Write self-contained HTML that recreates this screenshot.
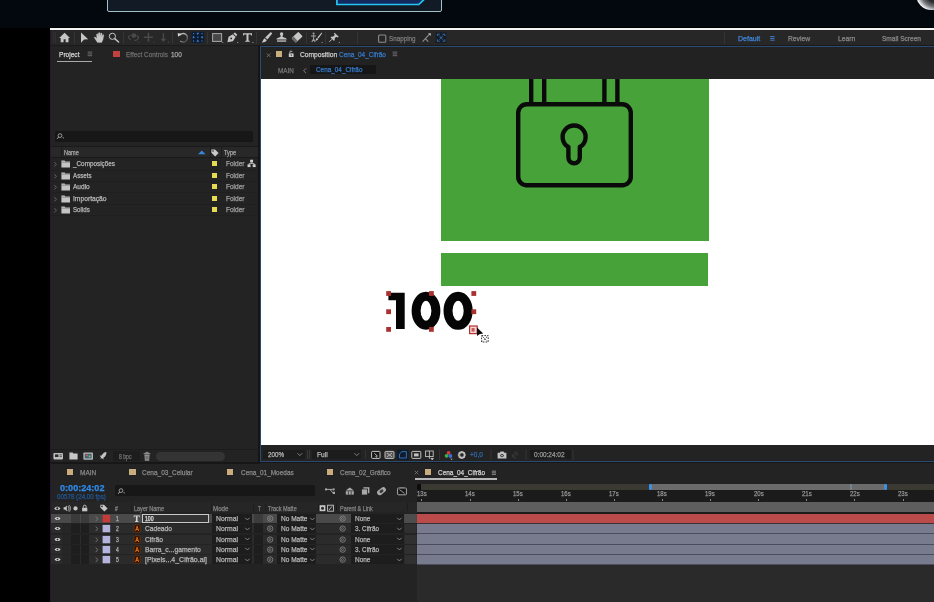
<!DOCTYPE html>
<html><head><meta charset="utf-8"><title>AE</title>
<style>
html,body{margin:0;padding:0;}
html{overflow:hidden;width:934px;height:602px;}
body{width:934px;height:602px;overflow:hidden;background:#232323;position:relative;font-family:"Liberation Sans",sans-serif;}
#r{position:absolute;left:0;top:0;width:934px;height:602px;filter:blur(0.6px);}
#r div,#r svg,#r span{position:absolute;display:block;}
.t{white-space:nowrap;transform-origin:0 50%;-webkit-text-stroke:0.25px currentColor;}
</style></head><body><div id="r">
<div style="left:-12px;top:-12px;width:958px;height:40px;background:#03070e;"></div>
<div style="left:107px;top:-5.7px;width:333.4px;height:15.2px;background:#111a25;border:1.1px solid #a3c1c8;border-radius:2px;"></div>
<svg style="left:330px;top:0px;" width="104" height="8" viewBox="0 0 104 8"><path d="M6.9,-2 V4.5 H88.8 L95.6,-2" fill="#132a5e" stroke="#24c6f4" stroke-width="1.7"/></svg>
<div style="left:915.6px;top:-21.4px;width:31px;height:31px;background:#1b1e22;border-radius:50%;background:radial-gradient(circle at 64% 40%,#202226 0,#2a2c30 40%,#77797c 58%,#f2f2f2 74%,#f6f6f6 100%);"></div>
<div style="left:-12px;top:27.6px;width:62px;height:587px;background:#000;"></div>
<div style="left:50px;top:30px;width:1.2px;height:584px;background:#2a1536;"></div>
<div style="left:50px;top:26.7px;width:896px;height:1.3px;background:#000;"></div>
<div style="left:50px;top:27.8px;width:896px;height:2.4px;background:#f4f4f4;"></div>
<div style="left:51px;top:30.2px;width:895px;height:1.1px;background:#1c1c1c;"></div>
<div style="left:51px;top:30.2px;width:895px;height:16px;background:#272727;"></div>
<div style="left:73.9px;top:31.5px;width:1px;height:12px;background:#343434;"></div>
<div style="left:122.8px;top:31.5px;width:1px;height:12px;background:#343434;"></div>
<div style="left:172.1px;top:31.5px;width:1px;height:12px;background:#343434;"></div>
<div style="left:206.9px;top:31.5px;width:1px;height:12px;background:#343434;"></div>
<div style="left:256.1px;top:31.5px;width:1px;height:12px;background:#343434;"></div>
<div style="left:305.7px;top:31.5px;width:1px;height:12px;background:#343434;"></div>
<div style="left:325.0px;top:31.5px;width:1px;height:12px;background:#343434;"></div>
<div style="left:356.5px;top:31.5px;width:1px;height:12px;background:#343434;"></div>
<div style="left:723.8px;top:31.5px;width:1px;height:12px;background:#343434;"></div>
<div style="left:51px;top:44.8px;width:895px;height:1.6px;background:#1a1a1a;"></div>
<div style="left:53px;top:32px;width:0.8px;height:11px;background:#313131;"></div>
<div style="left:54.6px;top:32px;width:0.8px;height:11px;background:#313131;"></div>
<svg style="left:50px;top:28px;" width="884" height="20" viewBox="50 28 884 20"><path d="M59.2,38 L64.6,32.8 L70,38 L68.5,38 L68.5,42.2 L65.6,42.2 L65.6,39.2 L63.6,39.2 L63.6,42.2 L60.7,42.2 L60.7,38 Z" fill="#c6c6c6"/><path d="M81,32.6 L88.2,39.2 L84.1,39.6 L81,42.8 Z" fill="#c6c6c6"/><path d="M97.4,42.4 L95.6,39.8 L94.2,37.6 C94.4,36.7 95.4,36.7 96,37.5 L96.9,38.7 L96.5,34.4 C96.6,33.5 97.9,33.5 98,34.4 L98.4,36.6 L98.4,33.2 C98.5,32.3 99.9,32.3 100,33.2 L100.1,36.5 L100.6,33.4 C100.8,32.6 102,32.8 102,33.6 L101.8,36.9 L102.5,34.9 C102.9,34.2 104,34.6 103.8,35.4 L103,39.6 L101.7,42.4 Z" fill="#c6c6c6" stroke="#c6c6c6" stroke-width="0.3" stroke-linejoin="round"/><circle cx="112.4" cy="36.3" r="3.1" fill="none" stroke="#c6c6c6" stroke-width="1"/><path d="M114.7,38.6 L118.6,42" stroke="#c6c6c6" stroke-width="1.4" stroke-linecap="round"/><circle cx="133.8" cy="35.6" r="2.4" fill="#4a4a4a"/><path d="M130.5,35.2 C127.5,36.4 127.8,38.6 131,39.6 M136.6,35.6 C139.8,37 139,40 134.4,40.6" fill="none" stroke="#4a4a4a" stroke-width="1.2"/><rect x="138.3" y="41.6" width="1" height="1" fill="#4a4a4a"/><path d="M148.4,32.8 V41.8 M143.9,37.3 H152.9" stroke="#4a4a4a" stroke-width="1.5"/><rect x="153.5" y="41.8" width="1" height="1" fill="#4a4a4a"/><path d="M163.4,33 V41" stroke="#4a4a4a" stroke-width="1.3"/><path d="M160.6,38.8 L163.4,42 L166.2,38.8 Z" fill="#4a4a4a"/><rect x="168" y="41.8" width="1" height="1" fill="#4a4a4a"/><defs><linearGradient id="rg" x1="0" y1="0" x2="1" y2="1"><stop offset="0" stop-color="#d8d8d8"/><stop offset="0.55" stop-color="#8a8a8a"/><stop offset="1" stop-color="#3c3c3c"/></linearGradient></defs><path d="M179.6,35.4 A4.3,4.3 0 1 1 180.2,40.9" fill="none" stroke="url(#rg)" stroke-width="1.3"/><path d="M177.6,33.2 L181.6,33.8 L178.2,36.8 Z" fill="#d8d8d8"/><rect x="191.6" y="31.9" width="12.4" height="10.8" fill="#0d1b30"/><g fill="#3f7cc4"><rect x="193" y="33" width="1.2" height="1.2"/><rect x="201.4" y="33" width="1.2" height="1.2"/><rect x="193" y="40.4" width="1.2" height="1.2"/><rect x="201.4" y="40.4" width="1.2" height="1.2"/><path d="M196.3,32.8 h3 l-1.5,2.2 Z M196.3,41.8 h3 l-1.5,-2.2 Z M192.8,35.8 v3 l2.2,-1.5 Z M202.8,35.8 v3 l-2.2,-1.5 Z"/><rect x="196.9" y="36.4" width="1.8" height="1.8" opacity=".55"/></g><rect x="212.6" y="33.6" width="9" height="7.8" fill="#474747" stroke="#a9a9a9" stroke-width="1"/><rect x="222.3" y="42" width="1" height="1" fill="#9a9a9a"/><path d="M227.4,42.2 L228.6,36.8 L232.8,34.2 L235.6,37 L233,41.2 Z" fill="#c6c6c6"/><path d="M233.4,33.6 L235,32.4 L237.2,34.6 L236.2,36.4 Z" fill="#c6c6c6"/><circle cx="231.2" cy="38.4" r="0.9" fill="#272727"/><rect x="237.2" y="42" width="1" height="1" fill="#9a9a9a"/><path d="M243,33.2 H252 V35.6 H251.2 L250.8,34.4 H248.5 V40.6 L249.8,41 V41.8 H245.2 V41 L246.5,40.6 V34.4 H244.2 L243.8,35.6 H243 Z" fill="#c6c6c6"/><rect x="252.4" y="42" width="1" height="1" fill="#9a9a9a"/><path d="M270.8,32 L272.2,33.4 L267.4,39.6 L265.2,37.6 Z" fill="#c6c6c6"/><path d="M264.6,38.2 L266.8,40.2 C265.8,42 263.8,42.6 261.8,42.4 C263,41.4 263,39.2 264.6,38.2 Z" fill="#c6c6c6"/><circle cx="281.6" cy="33.9" r="1.7" fill="#c6c6c6"/><path d="M280.7,34.6 H282.5 L282.7,37 L285.6,38 C286.4,38.3 286.8,38.9 286.8,39.6 H276.4 C276.4,38.9 276.8,38.3 277.6,38 L280.5,37 Z" fill="#c6c6c6"/><rect x="277" y="40.4" width="9.2" height="1.3" fill="#c6c6c6"/><g transform="rotate(-42 297 37.3)"><rect x="292.4" y="34.2" width="9.4" height="6.2" rx="0.8" fill="#c6c6c6"/><rect x="292.4" y="34.2" width="2.6" height="6.2" rx="0.6" fill="#6a6a6a"/></g><circle cx="313.6" cy="33.6" r="1.1" fill="#9d9d9d"/><path d="M311,36 H316 M313.6,35 V39 M313.6,39 L311.8,42 M313.6,39 L315.2,42" stroke="#9d9d9d" stroke-width="1.1" fill="none"/><path d="M321.6,32.6 L322.2,33.2 L318.4,38.4 L317.4,37.6 Z" fill="#c6c6c6"/><path d="M317,38 L318.2,39 C317.6,40.4 316.4,40.8 315.2,40.6 C316,40 316,38.6 317,38 Z" fill="#c6c6c6"/><rect x="321.6" y="42" width="1" height="1" fill="#9a9a9a"/><path d="M334.6,32.8 L338.8,36.8 L337.6,37.4 L336.2,36.8 L334.6,38.6 L334.8,40.2 L333.8,40.8 L330.6,37.4 L331.4,36.6 L333,36.8 L334.8,35 L334,33.6 Z" fill="#c6c6c6"/><path d="M332,39.2 L329.4,41.8" stroke="#c6c6c6" stroke-width="1"/><rect x="338.8" y="42" width="1" height="1" fill="#9a9a9a"/><rect x="378.6" y="35" width="7.2" height="7.2" rx="1" fill="none" stroke="#8c8c8c" stroke-width="1.1"/><path d="M422.6,41.6 L425.4,38.6 L428.2,41.6 M425.8,38.2 L429.6,34.2" stroke="#8f8f8f" stroke-width="1.1" fill="none"/><path d="M428,33.2 H430.8 V36 Z" fill="#bdbdbd"/><rect x="435.6" y="32.4" width="10.8" height="10.6" fill="#151d28"/><path d="M437.4,36 V34.2 H439.6 M442.6,34.2 H444.8 V36 M444.8,39.4 V41.2 H442.6 M439.6,41.2 H437.4 V39.4 M439.4,36 L442.8,39.4 M442.8,36 L439.4,39.4" stroke="#3b6ea8" stroke-width="1" fill="none"/><path d="M770.2,36.6 H774.6 M770.2,38.4 H774.6 M770.2,40.2 H774.6" stroke="#3f86d8" stroke-width="0.9"/></svg>
<span class="t" style="left:388.8px;top:34.00px;font-size:7.5px;line-height:9.00px;color:#7d7d7d;transform:scaleX(0.836);">Snapping</span>
<span class="t" style="left:738px;top:34.00px;font-size:7.5px;line-height:9.00px;color:#3f86d8;transform:scaleX(0.934);">Default</span>
<span class="t" style="left:787.7px;top:34.00px;font-size:7.5px;line-height:9.00px;color:#8a8a8a;transform:scaleX(0.899);">Review</span>
<span class="t" style="left:837.8px;top:34.00px;font-size:7.5px;line-height:9.00px;color:#8a8a8a;transform:scaleX(0.897);">Learn</span>
<span class="t" style="left:882px;top:34.00px;font-size:7.5px;line-height:9.00px;color:#8a8a8a;transform:scaleX(0.874);">Small Screen</span>
<span class="t" style="left:58.6px;top:50.22px;font-size:7.8px;line-height:9.36px;color:#d6d6d6;transform:scaleX(0.844);">Project</span>
<div style="left:57px;top:60.5px;width:34.8px;height:1.1px;background:#a8a8a8;"></div>
<svg style="left:87px;top:51.4px;" width="6" height="6" viewBox="0 0 6 6"><path d="M0.6,1.2 H5.2 M0.6,2.9 H5.2 M0.6,4.6 H5.2" stroke="#5c5c5c" stroke-width="1.25"/></svg>
<div style="left:113.4px;top:51.3px;width:6.3px;height:6px;background:#c2413f;"></div>
<span class="t" style="left:126.2px;top:50.22px;font-size:7.8px;line-height:9.36px;color:#6f6f6f;transform:scaleX(0.823);">Effect Controls</span>
<span class="t" style="left:170.7px;top:50.22px;font-size:7.8px;line-height:9.36px;color:#a8a8a8;transform:scaleX(0.830);">100</span>
<div style="left:55px;top:131px;width:198px;height:10.8px;background:#171717;border-radius:1.5px;"></div>
<svg style="left:56px;top:132px;" width="12" height="9" viewBox="0 0 12 9"><circle cx="4" cy="3.6" r="1.9" fill="none" stroke="#a5a5a5" stroke-width="0.9"/><path d="M2.7,5 L1,6.9" stroke="#a5a5a5" stroke-width="1"/><path d="M6.2,5.6 h2 l-1,1.2 Z" fill="#a5a5a5"/></svg>
<div style="left:51px;top:145.6px;width:209px;height:1px;background:#1a1a1a;"></div>
<div style="left:51px;top:146.6px;width:209px;height:10.6px;background:#282828;"></div>
<div style="left:51px;top:157.2px;width:209px;height:1px;background:#1a1a1a;"></div>
<div style="left:61px;top:147px;width:1px;height:10px;background:#1c1c1c;"></div>
<div style="left:210px;top:147px;width:1px;height:10px;background:#1c1c1c;"></div>
<div style="left:221px;top:147px;width:1px;height:10px;background:#1c1c1c;"></div>
<span class="t" style="left:63.9px;top:149.02px;font-size:6.8px;line-height:8.16px;color:#a9a9a9;transform:scaleX(0.816);">Name</span>
<svg style="left:197px;top:148px;" width="10" height="8" viewBox="0 0 10 8"><path d="M1,6.2 L4.8,2.4 L8.6,6.2 Z" fill="#3a86dd"/></svg>
<svg style="left:210px;top:147.5px;" width="10" height="10" viewBox="0 0 10 10"><path d="M1.4,1.4 H5 L8.6,5 L5.2,8.4 L1.4,4.8 Z" fill="#c9c9c9"/><circle cx="3" cy="3" r="0.8" fill="#282828"/></svg>
<span class="t" style="left:224.2px;top:149.02px;font-size:6.8px;line-height:8.16px;color:#a9a9a9;transform:scaleX(0.821);">Type</span>
<div style="left:51px;top:169.5px;width:209px;height:0.8px;background:#1f1f1f;"></div>
<svg style="left:53px;top:161.2px;" width="5" height="7" viewBox="0 0 5 7"><path d="M1.4,1.2 L3.4,3.3 L1.4,5.4" fill="none" stroke="#6c6c6c" stroke-width="0.9"/></svg>
<svg style="left:61px;top:160.2px;" width="10" height="8" viewBox="0 0 10 8"><path d="M0.4,0.6 H3.6 L4.4,1.6 H9 V7.4 H0.4 Z" fill="#c4c4c4"/><path d="M0.4,2.2 H9" stroke="#555" stroke-width="0.5"/></svg>
<span class="t" style="left:73.2px;top:160.38px;font-size:7.2px;line-height:8.64px;color:#b8b8b8;transform:scaleX(0.882);">_Composições</span>
<div style="left:211.7px;top:161.2px;width:5.4px;height:5.0px;background:#e6dc52;"></div>
<span class="t" style="left:225.5px;top:160.28px;font-size:7.2px;line-height:8.64px;color:#a2a2a2;transform:scaleX(0.907);">Folder</span>
<div style="left:51px;top:180.9px;width:209px;height:0.8px;background:#1f1f1f;"></div>
<svg style="left:53px;top:172.6px;" width="5" height="7" viewBox="0 0 5 7"><path d="M1.4,1.2 L3.4,3.3 L1.4,5.4" fill="none" stroke="#6c6c6c" stroke-width="0.9"/></svg>
<svg style="left:61px;top:171.6px;" width="10" height="8" viewBox="0 0 10 8"><path d="M0.4,0.6 H3.6 L4.4,1.6 H9 V7.4 H0.4 Z" fill="#c4c4c4"/><path d="M0.4,2.2 H9" stroke="#555" stroke-width="0.5"/></svg>
<span class="t" style="left:73.2px;top:171.78px;font-size:7.2px;line-height:8.64px;color:#b8b8b8;transform:scaleX(0.861);">Assets</span>
<div style="left:211.7px;top:172.6px;width:5.4px;height:5.0px;background:#e6dc52;"></div>
<span class="t" style="left:225.5px;top:171.68px;font-size:7.2px;line-height:8.64px;color:#a2a2a2;transform:scaleX(0.907);">Folder</span>
<div style="left:51px;top:192.3px;width:209px;height:0.8px;background:#1f1f1f;"></div>
<svg style="left:53px;top:184px;" width="5" height="7" viewBox="0 0 5 7"><path d="M1.4,1.2 L3.4,3.3 L1.4,5.4" fill="none" stroke="#6c6c6c" stroke-width="0.9"/></svg>
<svg style="left:61px;top:183px;" width="10" height="8" viewBox="0 0 10 8"><path d="M0.4,0.6 H3.6 L4.4,1.6 H9 V7.4 H0.4 Z" fill="#c4c4c4"/><path d="M0.4,2.2 H9" stroke="#555" stroke-width="0.5"/></svg>
<span class="t" style="left:73.2px;top:183.18px;font-size:7.2px;line-height:8.64px;color:#b8b8b8;transform:scaleX(0.912);">Audio</span>
<div style="left:211.7px;top:184.0px;width:5.4px;height:5.0px;background:#e6dc52;"></div>
<span class="t" style="left:225.5px;top:183.08px;font-size:7.2px;line-height:8.64px;color:#a2a2a2;transform:scaleX(0.907);">Folder</span>
<div style="left:51px;top:203.8px;width:209px;height:0.8px;background:#1f1f1f;"></div>
<svg style="left:53px;top:195.5px;" width="5" height="7" viewBox="0 0 5 7"><path d="M1.4,1.2 L3.4,3.3 L1.4,5.4" fill="none" stroke="#6c6c6c" stroke-width="0.9"/></svg>
<svg style="left:61px;top:194.5px;" width="10" height="8" viewBox="0 0 10 8"><path d="M0.4,0.6 H3.6 L4.4,1.6 H9 V7.4 H0.4 Z" fill="#c4c4c4"/><path d="M0.4,2.2 H9" stroke="#555" stroke-width="0.5"/></svg>
<span class="t" style="left:73.2px;top:194.68px;font-size:7.2px;line-height:8.64px;color:#b8b8b8;transform:scaleX(0.933);">Importação</span>
<div style="left:211.7px;top:195.5px;width:5.4px;height:5.0px;background:#e6dc52;"></div>
<span class="t" style="left:225.5px;top:194.58px;font-size:7.2px;line-height:8.64px;color:#a2a2a2;transform:scaleX(0.907);">Folder</span>
<div style="left:51px;top:215.10000000000002px;width:209px;height:0.8px;background:#1f1f1f;"></div>
<svg style="left:53px;top:206.8px;" width="5" height="7" viewBox="0 0 5 7"><path d="M1.4,1.2 L3.4,3.3 L1.4,5.4" fill="none" stroke="#6c6c6c" stroke-width="0.9"/></svg>
<svg style="left:61px;top:205.8px;" width="10" height="8" viewBox="0 0 10 8"><path d="M0.4,0.6 H3.6 L4.4,1.6 H9 V7.4 H0.4 Z" fill="#c4c4c4"/><path d="M0.4,2.2 H9" stroke="#555" stroke-width="0.5"/></svg>
<span class="t" style="left:73.2px;top:205.98px;font-size:7.2px;line-height:8.64px;color:#b8b8b8;transform:scaleX(0.857);">Solids</span>
<div style="left:211.7px;top:206.8px;width:5.4px;height:5.0px;background:#e6dc52;"></div>
<span class="t" style="left:225.5px;top:205.88px;font-size:7.2px;line-height:8.64px;color:#a2a2a2;transform:scaleX(0.907);">Folder</span>
<svg style="left:247.4px;top:158.6px;" width="9.2" height="9.2" viewBox="0 0 10 10"><rect x="3.4" y="0.8" width="3.2" height="3" fill="#cfcfcf"/><rect x="0.6" y="5.8" width="3.2" height="3" fill="#cfcfcf"/><rect x="6.2" y="5.8" width="3.2" height="3" fill="#cfcfcf"/><path d="M5,3.8 V4.9 M2.2,5.8 V4.9 H7.8 V5.8" stroke="#cfcfcf" stroke-width="0.8" fill="none"/></svg>
<div style="left:257.6px;top:46.4px;width:2.4px;height:416px;background:#151515;"></div>
<div style="left:51px;top:448.6px;width:209px;height:0.8px;background:#1c1c1c;"></div>
<svg style="left:52px;top:450px;" width="56" height="12" viewBox="0 0 56 12"><rect x="1.4" y="3" width="9.6" height="6.4" rx="0.8" fill="#bdbdbd"/><rect x="3" y="4.4" width="3.4" height="2.6" fill="#2a2a2a"/><path d="M7.6,4.8 H9.8 M7.6,6.4 H9.8" stroke="#2a2a2a" stroke-width="0.7"/><path d="M17.4,2.6 H20.6 L21.4,3.6 H25.6 V9.4 H17.4 Z" fill="#c6c6c6"/><rect x="31.4" y="2.4" width="9.6" height="7.4" rx="0.8" fill="#b5b5b5"/><rect x="32.8" y="3.8" width="6.8" height="4.6" fill="#3b5f7a"/><circle cx="35" cy="5.6" r="1.1" fill="#d85a4a"/><circle cx="37.6" cy="6.4" r="1.1" fill="#6fbf5a"/><path d="M54.4,2 C52.4,2.2 50.6,3.6 49.6,5.6 L47.6,5.8 L49,7.2 L48.4,8.8 L50,8.2 L51.4,9.6 L51.6,7.6 C53.6,6.6 54.6,4.4 54.4,2 Z" fill="#c4c4c4"/></svg>
<div style="left:112.5px;top:451.4px;width:27px;height:9.6px;background:#1d1d1d;"></div>
<span class="t" style="left:118.8px;top:452.84px;font-size:6.6px;line-height:7.92px;color:#727272;transform:scaleX(0.774);">8 bpc</span>
<svg style="left:142px;top:451px;" width="10" height="11" viewBox="0 0 10 11"><path d="M1.6,2.6 H8.4 M3.8,2.6 V1.4 H6.2 V2.6" stroke="#9a9a9a" stroke-width="0.9" fill="none"/><path d="M2.4,3.6 H7.6 L7.1,9.8 H2.9 Z" fill="#9a9a9a"/><path d="M4.1,4.8 V8.6 M5.9,4.8 V8.6" stroke="#2a2a2a" stroke-width="0.6"/></svg>
<div style="left:155.5px;top:451.8px;width:69.5px;height:9px;background:#343434;border-radius:4.5px;"></div>
<div style="left:260px;top:46.2px;width:690px;height:415.8px;background:#222222;border:1.1px solid #2b4a72;border-bottom-width:1.4px;border-right:none;box-sizing:border-box;"></div>
<svg style="left:265px;top:51px;" width="8" height="8" viewBox="0 0 8 8"><path d="M1.8,2.4 L5.4,6 M5.4,2.4 L1.8,6" stroke="#7c7c7c" stroke-width="0.8"/></svg>
<div style="left:275.9px;top:51.3px;width:6.3px;height:6px;background:#c8ae7f;"></div>
<svg style="left:287.8px;top:49.8px;" width="7" height="8" viewBox="0 0 7 8"><rect x="0.8" y="3.4" width="4.8" height="3.6" fill="#c8c8c8"/><path d="M1.9,3.4 V2.1 a1.1,1.1 0 0 1 2.2,0" fill="none" stroke="#c8c8c8" stroke-width="0.9"/><rect x="2.8" y="4.5" width="0.9" height="1.3" fill="#222"/></svg>
<span class="t" style="left:299.9px;top:50.22px;font-size:7.8px;line-height:9.36px;color:#d0d0d0;transform:scaleX(0.856);">Composition</span>
<span class="t" style="left:339.2px;top:50.22px;font-size:7.8px;line-height:9.36px;color:#377bcc;transform:scaleX(0.827);">Cena_04_Cifrão</span>
<svg style="left:392.2px;top:51.4px;" width="6" height="6" viewBox="0 0 6 6"><path d="M0.6,1.2 H5.2 M0.6,2.9 H5.2 M0.6,4.6 H5.2" stroke="#5c5c5c" stroke-width="1.25"/></svg>
<span class="t" style="left:278.3px;top:66.52px;font-size:6.8px;line-height:8.16px;color:#787878;transform:scaleX(0.935);">MAIN</span>
<svg style="left:302px;top:66.5px;" width="6" height="8" viewBox="0 0 6 8"><path d="M4,1.4 L1.6,3.8 L4,6.2" fill="none" stroke="#8a8a8a" stroke-width="0.9"/></svg>
<div style="left:309.8px;top:65.4px;width:66.5px;height:9px;background:#161616;border-radius:1px;"></div>
<span class="t" style="left:315.5px;top:66.28px;font-size:7.2px;line-height:8.64px;color:#377bcc;transform:scaleX(0.887);">Cena_04_Cifrão</span>
<div style="left:261px;top:78.6px;width:685px;height:366.6px;background:#ffffff;"></div>
<div style="left:440.7px;top:78.6px;width:267.9px;height:162.2px;background:#48a23a;"></div>
<div style="left:440.7px;top:253.1px;width:267.3px;height:33.3px;background:#48a23a;"></div>
<svg style="left:440px;top:78.6px;" width="270" height="163" viewBox="440 78.6 270 163"><g fill="none" stroke="#0a0a0a" stroke-width="4.4"><rect x="518.2" y="103.8" width="112.6" height="81.1" rx="8.6" ry="8.6"/><path d="M531.2,78 V103 M544.2,78 V103 M604.4,78 V103 M617.4,78 V103"/><path d="M568.4,146.6 A11.5,11.5 0 1 1 579.8,146.6 L579.8,157.2 A5.7,5.7 0 0 1 568.4,157.2 Z" stroke-linejoin="round"/></g></svg>
<svg style="left:380px;top:285px;" width="120" height="65" viewBox="380 285 120 65"><path d="M388.4,292.7 H404.7 V329.1 H396 V300.3 H388.4 Z" fill="#050505"/><ellipse cx="426" cy="310.8" rx="9.9" ry="14.5" fill="none" stroke="#050505" stroke-width="9"/><ellipse cx="458.1" cy="310.8" rx="10.1" ry="14.5" fill="none" stroke="#050505" stroke-width="9"/><rect x="386.20000000000005" y="291.1" width="4.8" height="4.8" fill="#a8322f"/><rect x="429.0" y="291.1" width="4.8" height="4.8" fill="#a8322f"/><rect x="471.40000000000003" y="291.1" width="4.8" height="4.8" fill="#a8322f"/><rect x="386.20000000000005" y="309.3" width="4.8" height="4.8" fill="#a8322f"/><rect x="471.40000000000003" y="309.3" width="4.8" height="4.8" fill="#a8322f"/><rect x="386.20000000000005" y="327.0" width="4.8" height="4.8" fill="#a8322f"/><rect x="429.0" y="327.0" width="4.8" height="4.8" fill="#a8322f"/><rect x="469.6" y="326" width="7.6" height="7.6" fill="#f4d6d6" stroke="#b5302e" stroke-width="1.2"/><rect x="471.6" y="328" width="3" height="3.6" fill="#c65b58"/><path d="M477,327.4 L477,336 L479.4,334.2 L483.2,333.4 Z" fill="#0c0c0c"/><g stroke="#333" stroke-width="1" fill="none" stroke-dasharray="1.6 1.2"><rect x="481.6" y="335.6" width="6.6" height="6.4"/><path d="M482.6,336.6 L487.2,341 M487.2,336.6 L482.6,341"/></g></svg>
<div style="left:261.3px;top:445.2px;width:684.7px;height:15.2px;background:#232323;"></div>
<div style="left:263.1px;top:450.1px;width:41.6px;height:9.2px;background:#1c1c1c;"></div>
<span class="t" style="left:267.7px;top:451.30px;font-size:7px;line-height:8.40px;color:#b8b8b8;transform:scaleX(0.894);">200%</span>
<svg style="left:296.2px;top:451.4px;" width="8" height="7" viewBox="0 0 8 7"><path d="M1.4,2.2 L3.8,4.6 L6.2,2.2" fill="none" stroke="#8a8a8a" stroke-width="0.9"/></svg>
<div style="left:307px;top:450.1px;width:0.8px;height:9.2px;background:#383838;"></div>
<div style="left:308.6px;top:450.1px;width:0.8px;height:9.2px;background:#383838;"></div>
<div style="left:311.5px;top:450.1px;width:49.5px;height:9.2px;background:#1c1c1c;"></div>
<span class="t" style="left:316.8px;top:451.30px;font-size:7px;line-height:8.40px;color:#b8b8b8;transform:scaleX(0.940);">Full</span>
<svg style="left:352.6px;top:451.4px;" width="8" height="7" viewBox="0 0 8 7"><path d="M1.4,2.2 L3.8,4.6 L6.2,2.2" fill="none" stroke="#8a8a8a" stroke-width="0.9"/></svg>
<div style="left:364.5px;top:450.1px;width:1px;height:9.2px;background:#333;"></div>
<svg style="left:365px;top:446px;" width="215" height="15" viewBox="365 444.6 215 15"><rect x="371.6" y="450" width="8.4" height="7" rx="0.8" fill="#171717" stroke="#c2c2c2" stroke-width="1"/><path d="M374.4,452 L377.4,454.6 L375.8,454.8 L376.6,456.2" stroke="#c2c2c2" stroke-width="0.9" fill="none"/><rect x="385" y="450" width="9" height="7" rx="0.8" fill="#555" stroke="#bdbdbd" stroke-width="1"/><path d="M387,451.6 L392,455.4 M392,451.6 L387,455.4" stroke="#c0c0c0" stroke-width="0.9"/><rect x="397.2" y="448.2" width="11.2" height="10.4" fill="#111c2b"/><path d="M399.4,456.6 V452.6 L402,450.2 H406.4 V456.6 Z" fill="none" stroke="#3270b8" stroke-width="1"/><rect x="411.8" y="450" width="9" height="7" rx="0.8" fill="none" stroke="#c2c2c2" stroke-width="1"/><rect x="414" y="452" width="4.6" height="3" fill="#c2c2c2"/><rect x="425.6" y="449.6" width="7.6" height="5.6" fill="none" stroke="#c2c2c2" stroke-width="0.9"/><path d="M429.4,449.6 V457.4 M431,457 h2.4 l-1.2,1.4 Z" stroke="#c2c2c2" stroke-width="0.9" fill="#c2c2c2"/><path d="M439.5,448 V458.6 M491,448 V458.6 M526,448 V458.6 M573,448 V458.6" stroke="#343434" stroke-width="1"/><circle cx="448.6" cy="451.4" r="1.9" fill="#d23c3c"/><circle cx="446.6" cy="454.4" r="1.9" fill="#3fae4a"/><circle cx="450.4" cy="454.6" r="1.9" fill="#3b6fd8"/><path d="M450.4,457.4 h2.4 l-1.2,1.3 Z" fill="#bbb"/><circle cx="461.8" cy="453.6" r="3" fill="none" stroke="#c2c2c2" stroke-width="1.3"/><path d="M461.8,449.6 V457.6 M457.8,453.6 H465.8 M459,450.8 L464.6,456.4 M464.6,450.8 L459,456.4" stroke="#c2c2c2" stroke-width="0.9"/><circle cx="461.8" cy="453.6" r="1.4" fill="#232323"/><path d="M497.6,451.4 H499.8 L500.6,450.2 H503.6 L504.4,451.4 H506.4 V457.2 H497.6 Z" fill="#c2c2c2"/><circle cx="502" cy="454.2" r="1.7" fill="#232323"/><circle cx="502" cy="454.2" r="0.9" fill="#c2c2c2"/><path d="M512.4,455.6 L516.4,451.6 M513.4,452.6 a2,2 0 1 0 2.6,3 M516.6,454.4 a2,2 0 1 0 -2.6,-3" stroke="#3c3c3c" stroke-width="1" fill="none"/></svg>
<span class="t" style="left:470.4px;top:451.30px;font-size:7px;line-height:8.40px;color:#2f69b2;transform:scaleX(0.926);">+0,0</span>
<div style="left:529.5px;top:450.1px;width:41px;height:9.2px;background:#1b1b1b;"></div>
<span class="t" style="left:533.5px;top:451.42px;font-size:6.8px;line-height:8.16px;color:#9a9a9a;transform:scaleX(0.949);">0:00:24:02</span>
<div style="left:50px;top:462px;width:896px;height:1px;background:#161616;"></div>
<div style="left:51px;top:462.6px;width:895px;height:151.4px;background:#232323;"></div>
<div style="left:51px;top:462.2px;width:209px;height:1.8px;background:#171717;"></div>
<div style="left:66.6px;top:469.2px;width:6.2px;height:5.6px;background:#c8ae7f;"></div>
<span class="t" style="left:79.8px;top:469.10px;font-size:7px;line-height:8.40px;color:#8a8a8a;transform:scaleX(0.926);">MAIN</span>
<div style="left:129.4px;top:469.2px;width:6.2px;height:5.6px;background:#c8ae7f;"></div>
<span class="t" style="left:142.4px;top:469.10px;font-size:7px;line-height:8.40px;color:#8a8a8a;transform:scaleX(0.929);">Cena_03_Celular</span>
<div style="left:227.2px;top:469.2px;width:6.2px;height:5.6px;background:#c8ae7f;"></div>
<span class="t" style="left:240.6px;top:469.10px;font-size:7px;line-height:8.40px;color:#8a8a8a;transform:scaleX(0.921);">Cena_01_Moedas</span>
<div style="left:326.6px;top:469.2px;width:6.2px;height:5.6px;background:#c8ae7f;"></div>
<span class="t" style="left:340px;top:469.10px;font-size:7px;line-height:8.40px;color:#8a8a8a;transform:scaleX(0.924);">Cena_02_Gráfico</span>
<svg style="left:413px;top:469px;" width="7" height="7" viewBox="0 0 7 7"><path d="M1.8,1.8 L5.2,5.2 M5.2,1.8 L1.8,5.2" stroke="#7c7c7c" stroke-width="0.8"/></svg>
<div style="left:424.6px;top:469.2px;width:6.2px;height:5.6px;background:#c8ae7f;"></div>
<span class="t" style="left:437.6px;top:468.98px;font-size:7.2px;line-height:8.64px;color:#d2d2d2;transform:scaleX(0.898);">Cena_04_Cifrão</span>
<svg style="left:491px;top:469.6px;" width="6" height="6" viewBox="0 0 6 6"><path d="M0.8,1.2 H5 M0.8,2.8 H5 M0.8,4.4 H5" stroke="#8a8a8a" stroke-width="1"/></svg>
<div style="left:415.2px;top:478.2px;width:81.8px;height:2px;background:#b8b8b8;"></div>
<span class="t" style="left:60.4px;top:483.08px;font-size:9.2px;line-height:11.04px;color:#2f8ae8;font-weight:bold;transform:scaleX(0.989);">0:00:24:02</span>
<span class="t" style="left:57px;top:492.96px;font-size:6.4px;line-height:7.68px;color:#22558f;transform:scaleX(0.977);">00578 (24.00 fps)</span>
<div style="left:115.2px;top:485px;width:199.5px;height:11.4px;background:#171717;border-radius:1.5px;"></div>
<svg style="left:117px;top:486.6px;" width="12" height="9" viewBox="0 0 12 9"><circle cx="4" cy="3.6" r="1.9" fill="none" stroke="#a5a5a5" stroke-width="0.9"/><path d="M2.7,5 L1,6.9" stroke="#a5a5a5" stroke-width="1"/><path d="M6.2,5.6 h2 l-1,1.2 Z" fill="#a5a5a5"/></svg>
<svg style="left:320px;top:484px;" width="92" height="14" viewBox="320 484 92 14"><path d="M326,489.4 H330 L332.6,492.6 H334.6 M330,489.4 L332.6,489.4" stroke="#a9a9a9" stroke-width="1" fill="none"/><rect x="325" y="488.4" width="2" height="2" fill="#a9a9a9"/><rect x="332.6" y="488.4" width="2" height="2" fill="#a9a9a9"/><rect x="332.8" y="491.8" width="2.2" height="2.2" fill="#a9a9a9"/><path d="M345.6,490.6 L349.8,487.6 L354,490.6 Z" fill="#a9a9a9"/><rect x="345.8" y="491.2" width="8" height="3.4" fill="#a9a9a9"/><path d="M348.4,491.2 V494.6 M351.2,491.2 V494.6" stroke="#232323" stroke-width="0.7"/><rect x="363.4" y="487.2" width="6" height="6" fill="#a9a9a9"/><rect x="361.6" y="489" width="6" height="6" fill="#a9a9a9" stroke="#232323" stroke-width="0.8"/><g transform="rotate(-38 381.5 491.2)"><rect x="376.6" y="488.6" width="9.8" height="5.2" rx="2.6" fill="#a9a9a9"/><rect x="379.4" y="489.8" width="4.2" height="2.8" rx="1.4" fill="#3a3a3a"/></g><rect x="397.6" y="488" width="8.8" height="6.8" rx="0.8" fill="#161616" stroke="#a9a9a9" stroke-width="1"/><path d="M399.4,489.6 L404.6,493.4 M401,487.2 V488 M403,487.2 V488" stroke="#a9a9a9" stroke-width="0.9"/></svg>
<div style="left:51px;top:502px;width:366px;height:9.6px;background:#262626;"></div>
<svg style="left:51px;top:502px;" width="366" height="11" viewBox="51 502 366 11"><path d="M54.2,508.4 C55.6,506.2 59,506.2 60.4,508.4 C59,510.6 55.6,510.6 54.2,508.4 Z" fill="#c6c6c6"/><circle cx="57.3" cy="508.4" r="1.1" fill="#262626"/><path d="M63.6,507.2 H65 L66.8,505.6 V511.2 L65,509.6 H63.6 Z" fill="#c6c6c6"/><path d="M67.8,506 A3,3 0 0 1 67.8,510.8" stroke="#c6c6c6" stroke-width="0.9" fill="none"/><path d="M68.9,505 A4.4,4.4 0 0 1 68.9,511.8" stroke="#c6c6c6" stroke-width="0.8" fill="none"/><circle cx="75.5" cy="508.4" r="2.1" fill="#c6c6c6"/><rect x="82.1" y="507.8" width="5.2" height="3.5" fill="#c6c6c6"/><path d="M83.3,507.8 V506.6 a1.4,1.4 0 0 1 2.8,0 V507.8" fill="none" stroke="#c6c6c6" stroke-width="0.95"/><path d="M100.4,504.8 H104 L107.6,508.4 L104.4,511.6 L100.4,507.8 Z" fill="#c6c6c6"/><circle cx="102" cy="506.4" r="0.8" fill="#262626"/><rect x="319.6" y="505.2" width="5.8" height="6" fill="#c6c6c6"/><circle cx="322.5" cy="508.2" r="1.5" fill="#262626"/><rect x="327.6" y="505.2" width="5.8" height="6" fill="none" stroke="#c6c6c6" stroke-width="0.9"/><path d="M329,510 L332,506.4" stroke="#c6c6c6" stroke-width="0.9"/></svg>
<span class="t" style="left:114.6px;top:505.36px;font-size:6.4px;line-height:7.68px;color:#858585;transform:scaleX(0.787);">#</span>
<span class="t" style="left:134.4px;top:505.24px;font-size:6.6px;line-height:7.92px;color:#858585;transform:scaleX(0.835);">Layer Name</span>
<span class="t" style="left:213px;top:505.24px;font-size:6.6px;line-height:7.92px;color:#858585;transform:scaleX(0.939);">Mode</span>
<span class="t" style="left:258px;top:505.24px;font-size:6.6px;line-height:7.92px;color:#858585;transform:scaleX(0.695);">T</span>
<span class="t" style="left:268.2px;top:505.24px;font-size:6.6px;line-height:7.92px;color:#858585;transform:scaleX(0.830);">Track Matte</span>
<span class="t" style="left:339.8px;top:505.24px;font-size:6.6px;line-height:7.92px;color:#858585;transform:scaleX(0.828);">Parent &amp; Link</span>
<div style="left:130.5px;top:503px;width:0.8px;height:8px;background:#1d1d1d;"></div>
<div style="left:210.5px;top:503px;width:0.8px;height:8px;background:#1d1d1d;"></div>
<div style="left:252.5px;top:503px;width:0.8px;height:8px;background:#1d1d1d;"></div>
<div style="left:264.5px;top:503px;width:0.8px;height:8px;background:#1d1d1d;"></div>
<div style="left:317.5px;top:503px;width:0.8px;height:8px;background:#1d1d1d;"></div>
<div style="left:336px;top:503px;width:0.8px;height:8px;background:#1d1d1d;"></div>
<div style="left:407.4px;top:503px;width:0.8px;height:8px;background:#1d1d1d;"></div>
<div style="left:51px;top:513.9px;width:366px;height:9.2px;background:#4a4a4a;"></div>
<div style="left:71.4px;top:513.9px;width:8.6px;height:9.2px;background:#3a3a3a;"></div>
<div style="left:80.8px;top:513.9px;width:8px;height:9.2px;background:#3a3a3a;"></div>
<svg style="left:51px;top:513.9px;" width="366" height="9.2" viewBox="51 513.9 366 9.2"><path d="M54.4,518.5 C55.7,516.5 58.9,516.5 60.2,518.5 C58.9,520.5 55.7,520.5 54.4,518.5 Z" fill="#dcdcdc"/><circle cx="57.3" cy="518.5" r="1" fill="#4a4a4a"/><path d="M95.6,516.4 L97.5,518.7 L95.6,521.0" fill="none" stroke="#7e7e7e" stroke-width="0.85"/><rect x="102.4" y="514.8" width="7.6" height="7.4" fill="#c43c3a"/><path d="M133.6,515.3 H139.6 V517.1 H139 L138.7,516.2 H137.4 V520.9 L138.3,521.2 V521.8 H134.9 V521.2 L135.8,520.9 V516.2 H134.5 L134.2,517.1 H133.6 Z" fill="#d8d8d8"/><circle cx="270.2" cy="518.5" r="2.7" fill="none" stroke="#8d8d8d" stroke-width="0.8"/><circle cx="270.0" cy="518.5" r="1" fill="none" stroke="#8d8d8d" stroke-width="0.7"/><circle cx="342.8" cy="518.5" r="2.7" fill="none" stroke="#8d8d8d" stroke-width="0.8"/><circle cx="342.6" cy="518.5" r="1" fill="none" stroke="#8d8d8d" stroke-width="0.7"/></svg>
<span class="t" style="left:116.2px;top:515.10px;font-size:7px;line-height:8.40px;color:#b6b6b6;transform:scaleX(0.719);">1</span>
<div style="left:142.3px;top:514.3px;width:66.6px;height:8.399999999999999px;background:#333;border:1px solid #c9c9c9;box-sizing:border-box;"></div>
<span class="t" style="left:145px;top:515.04px;font-size:6.6px;line-height:7.92px;color:#e2e2e2;transform:scaleX(0.781);">100</span>
<div style="left:212px;top:513.9px;width:39.6px;height:9.2px;background:#1d1d1d;"></div>
<span class="t" style="left:216px;top:515.10px;font-size:7px;line-height:8.40px;color:#b6b6b6;transform:scaleX(0.975);">Normal</span>
<svg style="left:244px;top:515.5px;" width="7" height="6" viewBox="0 0 7 6"><path d="M1.2,1.8 L3.4,4 L5.6,1.8" fill="none" stroke="#8c8c8c" stroke-width="0.9"/></svg>
<div style="left:253.7px;top:513.9px;width:9.8px;height:9.2px;background:#3c3c3c;"></div>
<div style="left:276.6px;top:513.9px;width:39.8px;height:9.2px;background:#1d1d1d;"></div>
<span class="t" style="left:280.7px;top:515.10px;font-size:7px;line-height:8.40px;color:#b6b6b6;transform:scaleX(0.933);">No Matte</span>
<svg style="left:308.6px;top:515.5px;" width="7" height="6" viewBox="0 0 7 6"><path d="M1.2,1.8 L3.4,4 L5.6,1.8" fill="none" stroke="#8c8c8c" stroke-width="0.9"/></svg>
<div style="left:351.2px;top:513.9px;width:52.6px;height:9.2px;background:#1d1d1d;"></div>
<span class="t" style="left:355px;top:515.10px;font-size:7px;line-height:8.40px;color:#b6b6b6;transform:scaleX(0.920);">None</span>
<svg style="left:395.8px;top:515.5px;" width="7" height="6" viewBox="0 0 7 6"><path d="M1.2,1.8 L3.4,4 L5.6,1.8" fill="none" stroke="#8c8c8c" stroke-width="0.9"/></svg>
<div style="left:404.7px;top:513.9px;width:11.6px;height:9.2px;background:#4d4d4d;"></div>
<div style="left:51px;top:524.1999999999999px;width:366px;height:9.2px;background:#2b2b2b;"></div>
<div style="left:71.4px;top:524.1999999999999px;width:8.6px;height:9.2px;background:#1e1e1e;"></div>
<div style="left:80.8px;top:524.1999999999999px;width:8px;height:9.2px;background:#1e1e1e;"></div>
<div style="left:62.2px;top:524.1999999999999px;width:8.6px;height:9.2px;background:#262626;"></div>
<svg style="left:51px;top:524.1999999999999px;" width="366" height="9.2" viewBox="51 524.1999999999999 366 9.2"><path d="M54.4,528.8 C55.7,526.8 58.9,526.8 60.2,528.8 C58.9,530.8 55.7,530.8 54.4,528.8 Z" fill="#dcdcdc"/><circle cx="57.3" cy="528.8" r="1" fill="#2b2b2b"/><path d="M95.6,526.6999999999999 L97.5,529.0 L95.6,531.3" fill="none" stroke="#7e7e7e" stroke-width="0.85"/><rect x="102.4" y="525.0999999999999" width="7.6" height="7.4" fill="#b4b3db"/><rect x="134" y="525.0" width="6" height="7.6" rx="0.8" fill="#2f1203" stroke="#8a420e" stroke-width="0.5"/><path d="M135.5,531.1999999999999 L137,526.4 L138.5,531.1999999999999 M136,529.6999999999999 H138" stroke="#e8761c" stroke-width="0.9" fill="none"/><circle cx="270.2" cy="528.8" r="2.7" fill="none" stroke="#8d8d8d" stroke-width="0.8"/><circle cx="270.0" cy="528.8" r="1" fill="none" stroke="#8d8d8d" stroke-width="0.7"/><circle cx="342.8" cy="528.8" r="2.7" fill="none" stroke="#8d8d8d" stroke-width="0.8"/><circle cx="342.6" cy="528.8" r="1" fill="none" stroke="#8d8d8d" stroke-width="0.7"/></svg>
<span class="t" style="left:116.2px;top:525.40px;font-size:7px;line-height:8.40px;color:#b6b6b6;transform:scaleX(0.719);">2</span>
<span class="t" style="left:144.8px;top:525.40px;font-size:7px;line-height:8.40px;color:#b6b6b6;transform:scaleX(0.947);">Cadeado</span>
<div style="left:212px;top:524.1999999999999px;width:39.6px;height:9.2px;background:#1d1d1d;"></div>
<span class="t" style="left:216px;top:525.40px;font-size:7px;line-height:8.40px;color:#b6b6b6;transform:scaleX(0.975);">Normal</span>
<svg style="left:244px;top:525.8px;" width="7" height="6" viewBox="0 0 7 6"><path d="M1.2,1.8 L3.4,4 L5.6,1.8" fill="none" stroke="#8c8c8c" stroke-width="0.9"/></svg>
<div style="left:253.7px;top:524.1999999999999px;width:9.8px;height:9.2px;background:#1e1e1e;"></div>
<div style="left:276.6px;top:524.1999999999999px;width:39.8px;height:9.2px;background:#1d1d1d;"></div>
<span class="t" style="left:280.7px;top:525.40px;font-size:7px;line-height:8.40px;color:#b6b6b6;transform:scaleX(0.933);">No Matte</span>
<svg style="left:308.6px;top:525.8px;" width="7" height="6" viewBox="0 0 7 6"><path d="M1.2,1.8 L3.4,4 L5.6,1.8" fill="none" stroke="#8c8c8c" stroke-width="0.9"/></svg>
<div style="left:351.2px;top:524.1999999999999px;width:52.6px;height:9.2px;background:#1d1d1d;"></div>
<span class="t" style="left:355px;top:525.40px;font-size:7px;line-height:8.40px;color:#b6b6b6;transform:scaleX(0.907);">3. Cifrão</span>
<svg style="left:395.8px;top:525.8px;" width="7" height="6" viewBox="0 0 7 6"><path d="M1.2,1.8 L3.4,4 L5.6,1.8" fill="none" stroke="#8c8c8c" stroke-width="0.9"/></svg>
<div style="left:404.7px;top:524.1999999999999px;width:11.6px;height:9.2px;background:#303030;"></div>
<div style="left:51px;top:534.5px;width:366px;height:9.2px;background:#2b2b2b;"></div>
<div style="left:71.4px;top:534.5px;width:8.6px;height:9.2px;background:#1e1e1e;"></div>
<div style="left:80.8px;top:534.5px;width:8px;height:9.2px;background:#1e1e1e;"></div>
<div style="left:62.2px;top:534.5px;width:8.6px;height:9.2px;background:#262626;"></div>
<svg style="left:51px;top:534.5px;" width="366" height="9.2" viewBox="51 534.5 366 9.2"><path d="M54.4,539.1 C55.7,537.1 58.9,537.1 60.2,539.1 C58.9,541.1 55.7,541.1 54.4,539.1 Z" fill="#dcdcdc"/><circle cx="57.3" cy="539.1" r="1" fill="#2b2b2b"/><path d="M95.6,537.0 L97.5,539.3000000000001 L95.6,541.6" fill="none" stroke="#7e7e7e" stroke-width="0.85"/><rect x="102.4" y="535.4" width="7.6" height="7.4" fill="#b4b3db"/><rect x="134" y="535.3000000000001" width="6" height="7.6" rx="0.8" fill="#2f1203" stroke="#8a420e" stroke-width="0.5"/><path d="M135.5,541.5 L137,536.7 L138.5,541.5 M136,540.0 H138" stroke="#e8761c" stroke-width="0.9" fill="none"/><circle cx="270.2" cy="539.1" r="2.7" fill="none" stroke="#8d8d8d" stroke-width="0.8"/><circle cx="270.0" cy="539.1" r="1" fill="none" stroke="#8d8d8d" stroke-width="0.7"/><circle cx="342.8" cy="539.1" r="2.7" fill="none" stroke="#8d8d8d" stroke-width="0.8"/><circle cx="342.6" cy="539.1" r="1" fill="none" stroke="#8d8d8d" stroke-width="0.7"/></svg>
<span class="t" style="left:116.2px;top:535.70px;font-size:7px;line-height:8.40px;color:#b6b6b6;transform:scaleX(0.719);">3</span>
<span class="t" style="left:144.8px;top:535.70px;font-size:7px;line-height:8.40px;color:#b6b6b6;transform:scaleX(0.964);">Cifrão</span>
<div style="left:212px;top:534.5px;width:39.6px;height:9.2px;background:#1d1d1d;"></div>
<span class="t" style="left:216px;top:535.70px;font-size:7px;line-height:8.40px;color:#b6b6b6;transform:scaleX(0.975);">Normal</span>
<svg style="left:244px;top:536.1px;" width="7" height="6" viewBox="0 0 7 6"><path d="M1.2,1.8 L3.4,4 L5.6,1.8" fill="none" stroke="#8c8c8c" stroke-width="0.9"/></svg>
<div style="left:253.7px;top:534.5px;width:9.8px;height:9.2px;background:#1e1e1e;"></div>
<div style="left:276.6px;top:534.5px;width:39.8px;height:9.2px;background:#1d1d1d;"></div>
<span class="t" style="left:280.7px;top:535.70px;font-size:7px;line-height:8.40px;color:#b6b6b6;transform:scaleX(0.933);">No Matte</span>
<svg style="left:308.6px;top:536.1px;" width="7" height="6" viewBox="0 0 7 6"><path d="M1.2,1.8 L3.4,4 L5.6,1.8" fill="none" stroke="#8c8c8c" stroke-width="0.9"/></svg>
<div style="left:351.2px;top:534.5px;width:52.6px;height:9.2px;background:#1d1d1d;"></div>
<span class="t" style="left:355px;top:535.70px;font-size:7px;line-height:8.40px;color:#b6b6b6;transform:scaleX(0.920);">None</span>
<svg style="left:395.8px;top:536.1px;" width="7" height="6" viewBox="0 0 7 6"><path d="M1.2,1.8 L3.4,4 L5.6,1.8" fill="none" stroke="#8c8c8c" stroke-width="0.9"/></svg>
<div style="left:404.7px;top:534.5px;width:11.6px;height:9.2px;background:#303030;"></div>
<div style="left:51px;top:544.8px;width:366px;height:9.2px;background:#2b2b2b;"></div>
<div style="left:71.4px;top:544.8px;width:8.6px;height:9.2px;background:#1e1e1e;"></div>
<div style="left:80.8px;top:544.8px;width:8px;height:9.2px;background:#1e1e1e;"></div>
<div style="left:62.2px;top:544.8px;width:8.6px;height:9.2px;background:#262626;"></div>
<svg style="left:51px;top:544.8px;" width="366" height="9.2" viewBox="51 544.8 366 9.2"><path d="M54.4,549.4 C55.7,547.4 58.9,547.4 60.2,549.4 C58.9,551.4 55.7,551.4 54.4,549.4 Z" fill="#dcdcdc"/><circle cx="57.3" cy="549.4" r="1" fill="#2b2b2b"/><path d="M95.6,547.3 L97.5,549.6 L95.6,551.9" fill="none" stroke="#7e7e7e" stroke-width="0.85"/><rect x="102.4" y="545.6999999999999" width="7.6" height="7.4" fill="#b4b3db"/><rect x="134" y="545.6" width="6" height="7.6" rx="0.8" fill="#2f1203" stroke="#8a420e" stroke-width="0.5"/><path d="M135.5,551.8 L137,547.0 L138.5,551.8 M136,550.3 H138" stroke="#e8761c" stroke-width="0.9" fill="none"/><circle cx="270.2" cy="549.4" r="2.7" fill="none" stroke="#8d8d8d" stroke-width="0.8"/><circle cx="270.0" cy="549.4" r="1" fill="none" stroke="#8d8d8d" stroke-width="0.7"/><circle cx="342.8" cy="549.4" r="2.7" fill="none" stroke="#8d8d8d" stroke-width="0.8"/><circle cx="342.6" cy="549.4" r="1" fill="none" stroke="#8d8d8d" stroke-width="0.7"/></svg>
<span class="t" style="left:116.2px;top:546.00px;font-size:7px;line-height:8.40px;color:#b6b6b6;transform:scaleX(0.719);">4</span>
<span class="t" style="left:144.8px;top:546.00px;font-size:7px;line-height:8.40px;color:#b6b6b6;transform:scaleX(0.969);">Barra_c...gamento</span>
<div style="left:212px;top:544.8px;width:39.6px;height:9.2px;background:#1d1d1d;"></div>
<span class="t" style="left:216px;top:546.00px;font-size:7px;line-height:8.40px;color:#b6b6b6;transform:scaleX(0.975);">Normal</span>
<svg style="left:244px;top:546.4px;" width="7" height="6" viewBox="0 0 7 6"><path d="M1.2,1.8 L3.4,4 L5.6,1.8" fill="none" stroke="#8c8c8c" stroke-width="0.9"/></svg>
<div style="left:253.7px;top:544.8px;width:9.8px;height:9.2px;background:#1e1e1e;"></div>
<div style="left:276.6px;top:544.8px;width:39.8px;height:9.2px;background:#1d1d1d;"></div>
<span class="t" style="left:280.7px;top:546.00px;font-size:7px;line-height:8.40px;color:#b6b6b6;transform:scaleX(0.933);">No Matte</span>
<svg style="left:308.6px;top:546.4px;" width="7" height="6" viewBox="0 0 7 6"><path d="M1.2,1.8 L3.4,4 L5.6,1.8" fill="none" stroke="#8c8c8c" stroke-width="0.9"/></svg>
<div style="left:351.2px;top:544.8px;width:52.6px;height:9.2px;background:#1d1d1d;"></div>
<span class="t" style="left:355px;top:546.00px;font-size:7px;line-height:8.40px;color:#b6b6b6;transform:scaleX(0.907);">3. Cifrão</span>
<svg style="left:395.8px;top:546.4px;" width="7" height="6" viewBox="0 0 7 6"><path d="M1.2,1.8 L3.4,4 L5.6,1.8" fill="none" stroke="#8c8c8c" stroke-width="0.9"/></svg>
<div style="left:404.7px;top:544.8px;width:11.6px;height:9.2px;background:#303030;"></div>
<div style="left:51px;top:555.1px;width:366px;height:9.2px;background:#2b2b2b;"></div>
<div style="left:71.4px;top:555.1px;width:8.6px;height:9.2px;background:#1e1e1e;"></div>
<div style="left:80.8px;top:555.1px;width:8px;height:9.2px;background:#1e1e1e;"></div>
<div style="left:62.2px;top:555.1px;width:8.6px;height:9.2px;background:#262626;"></div>
<svg style="left:51px;top:555.1px;" width="366" height="9.2" viewBox="51 555.1 366 9.2"><path d="M54.4,559.7 C55.7,557.7 58.9,557.7 60.2,559.7 C58.9,561.7 55.7,561.7 54.4,559.7 Z" fill="#dcdcdc"/><circle cx="57.3" cy="559.7" r="1" fill="#2b2b2b"/><path d="M95.6,557.6 L97.5,559.9000000000001 L95.6,562.2" fill="none" stroke="#7e7e7e" stroke-width="0.85"/><rect x="102.4" y="556.0" width="7.6" height="7.4" fill="#b4b3db"/><rect x="134" y="555.9000000000001" width="6" height="7.6" rx="0.8" fill="#2f1203" stroke="#8a420e" stroke-width="0.5"/><path d="M135.5,562.1 L137,557.3000000000001 L138.5,562.1 M136,560.6 H138" stroke="#e8761c" stroke-width="0.9" fill="none"/><circle cx="270.2" cy="559.7" r="2.7" fill="none" stroke="#8d8d8d" stroke-width="0.8"/><circle cx="270.0" cy="559.7" r="1" fill="none" stroke="#8d8d8d" stroke-width="0.7"/><circle cx="342.8" cy="559.7" r="2.7" fill="none" stroke="#8d8d8d" stroke-width="0.8"/><circle cx="342.6" cy="559.7" r="1" fill="none" stroke="#8d8d8d" stroke-width="0.7"/></svg>
<span class="t" style="left:116.2px;top:556.30px;font-size:7px;line-height:8.40px;color:#b6b6b6;transform:scaleX(0.719);">5</span>
<span class="t" style="left:144.8px;top:556.30px;font-size:7px;line-height:8.40px;color:#b6b6b6;transform:scaleX(0.996);">[Pixels...4_Cifrão.ai]</span>
<div style="left:212px;top:555.1px;width:39.6px;height:9.2px;background:#1d1d1d;"></div>
<span class="t" style="left:216px;top:556.30px;font-size:7px;line-height:8.40px;color:#b6b6b6;transform:scaleX(0.975);">Normal</span>
<svg style="left:244px;top:556.7px;" width="7" height="6" viewBox="0 0 7 6"><path d="M1.2,1.8 L3.4,4 L5.6,1.8" fill="none" stroke="#8c8c8c" stroke-width="0.9"/></svg>
<div style="left:253.7px;top:555.1px;width:9.8px;height:9.2px;background:#1e1e1e;"></div>
<div style="left:276.6px;top:555.1px;width:39.8px;height:9.2px;background:#1d1d1d;"></div>
<span class="t" style="left:280.7px;top:556.30px;font-size:7px;line-height:8.40px;color:#b6b6b6;transform:scaleX(0.933);">No Matte</span>
<svg style="left:308.6px;top:556.7px;" width="7" height="6" viewBox="0 0 7 6"><path d="M1.2,1.8 L3.4,4 L5.6,1.8" fill="none" stroke="#8c8c8c" stroke-width="0.9"/></svg>
<div style="left:351.2px;top:555.1px;width:52.6px;height:9.2px;background:#1d1d1d;"></div>
<span class="t" style="left:355px;top:556.30px;font-size:7px;line-height:8.40px;color:#b6b6b6;transform:scaleX(0.920);">None</span>
<svg style="left:395.8px;top:556.7px;" width="7" height="6" viewBox="0 0 7 6"><path d="M1.2,1.8 L3.4,4 L5.6,1.8" fill="none" stroke="#8c8c8c" stroke-width="0.9"/></svg>
<div style="left:404.7px;top:555.1px;width:11.6px;height:9.2px;background:#303030;"></div>
<div style="left:416.9px;top:483.6px;width:529.1px;height:130.4px;background:#1b1b1b;"></div>
<div style="left:416.9px;top:564.6px;width:529.1px;height:49.4px;background:#2a2a2a;"></div>
<div style="left:417px;top:484.2px;width:6px;height:5.6px;background:#0c0c0c;border-radius:2.8px 0 0 2.8px;"></div>
<div style="left:420.8px;top:484.2px;width:525.2px;height:5.6px;background:#3b3a32;"></div>
<div style="left:652px;top:484.2px;width:232px;height:5.6px;background:#6b6b6b;"></div>
<div style="left:649px;top:483.8px;width:3.2px;height:6.4px;background:#3f8fe6;border-radius:1px;"></div>
<div style="left:884px;top:483.8px;width:3.2px;height:6.4px;background:#3f8fe6;border-radius:1px;"></div>
<div style="left:849.6px;top:484.4px;width:2px;height:5.2px;background:#76828e;"></div>
<div style="left:421.4px;top:498.6px;width:0.9px;height:2.4px;background:#8a8a8a;"></div>
<span class="t" style="left:416.8px;top:490.48px;font-size:7.2px;line-height:8.64px;color:#969696;transform:scaleX(0.844);">13s</span>
<div style="left:469.51px;top:498.6px;width:0.9px;height:2.4px;background:#8a8a8a;"></div>
<span class="t" style="left:464.91px;top:490.48px;font-size:7.2px;line-height:8.64px;color:#969696;transform:scaleX(0.844);">14s</span>
<div style="left:517.62px;top:498.6px;width:0.9px;height:2.4px;background:#8a8a8a;"></div>
<span class="t" style="left:513.02px;top:490.48px;font-size:7.2px;line-height:8.64px;color:#969696;transform:scaleX(0.844);">15s</span>
<div style="left:565.7299999999999px;top:498.6px;width:0.9px;height:2.4px;background:#8a8a8a;"></div>
<span class="t" style="left:561.1299999999999px;top:490.48px;font-size:7.2px;line-height:8.64px;color:#969696;transform:scaleX(0.844);">16s</span>
<div style="left:613.84px;top:498.6px;width:0.9px;height:2.4px;background:#8a8a8a;"></div>
<span class="t" style="left:609.24px;top:490.48px;font-size:7.2px;line-height:8.64px;color:#969696;transform:scaleX(0.844);">17s</span>
<div style="left:661.9499999999999px;top:498.6px;width:0.9px;height:2.4px;background:#8a8a8a;"></div>
<span class="t" style="left:657.3499999999999px;top:490.48px;font-size:7.2px;line-height:8.64px;color:#969696;transform:scaleX(0.844);">18s</span>
<div style="left:710.06px;top:498.6px;width:0.9px;height:2.4px;background:#8a8a8a;"></div>
<span class="t" style="left:705.4599999999999px;top:490.48px;font-size:7.2px;line-height:8.64px;color:#969696;transform:scaleX(0.844);">19s</span>
<div style="left:758.17px;top:498.6px;width:0.9px;height:2.4px;background:#8a8a8a;"></div>
<span class="t" style="left:753.5699999999999px;top:490.48px;font-size:7.2px;line-height:8.64px;color:#969696;transform:scaleX(0.844);">20s</span>
<div style="left:806.28px;top:498.6px;width:0.9px;height:2.4px;background:#8a8a8a;"></div>
<span class="t" style="left:801.68px;top:490.48px;font-size:7.2px;line-height:8.64px;color:#969696;transform:scaleX(0.844);">21s</span>
<div style="left:854.39px;top:498.6px;width:0.9px;height:2.4px;background:#8a8a8a;"></div>
<span class="t" style="left:849.79px;top:490.48px;font-size:7.2px;line-height:8.64px;color:#969696;transform:scaleX(0.844);">22s</span>
<div style="left:902.5px;top:498.6px;width:0.9px;height:2.4px;background:#8a8a8a;"></div>
<span class="t" style="left:897.9px;top:490.48px;font-size:7.2px;line-height:8.64px;color:#969696;transform:scaleX(0.844);">23s</span>
<div style="left:417px;top:502px;width:529px;height:9.5px;background:#5e5e5e;"></div>
<div style="left:417px;top:514px;width:529px;height:9px;background:#bb4a4a;"></div>
<div style="left:417px;top:524.2px;width:529px;height:9.2px;background:#787a8e;"></div>
<div style="left:417px;top:533.4000000000001px;width:529px;height:0.95px;background:#4b4c5c;"></div>
<div style="left:417px;top:534.35px;width:529px;height:9.2px;background:#787a8e;"></div>
<div style="left:417px;top:543.5500000000001px;width:529px;height:0.95px;background:#4b4c5c;"></div>
<div style="left:417px;top:544.5px;width:529px;height:9.2px;background:#787a8e;"></div>
<div style="left:417px;top:553.7px;width:529px;height:0.95px;background:#4b4c5c;"></div>
<div style="left:417px;top:554.6500000000001px;width:529px;height:9.2px;background:#787a8e;"></div>
<div style="left:417px;top:563.8500000000001px;width:529px;height:0.95px;background:#4b4c5c;"></div>
<div style="left:417px;top:523px;width:529px;height:1.2px;background:#3a3036;"></div>
</div></body></html>
